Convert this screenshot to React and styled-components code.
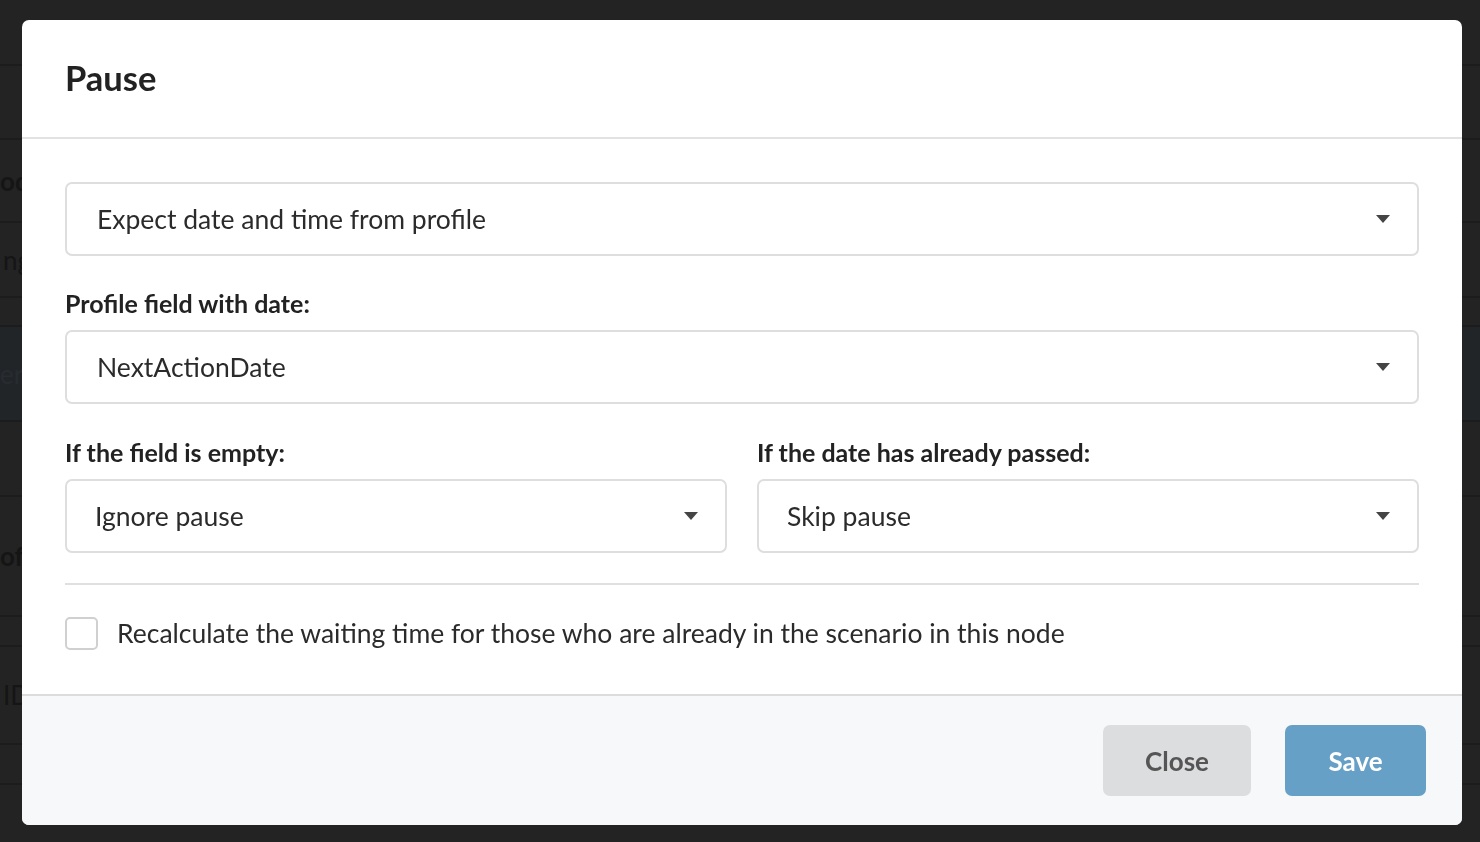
import React, { useState } from 'react';
import styled, { createGlobalStyle } from 'styled-components';

const GlobalStyle = createGlobalStyle`
  html, body {
    margin: 0;
    padding: 0;
    background: #232323;
    font-family: Lato, "Noto Sans", sans-serif;
  }
  * { box-sizing: border-box; }
`;

// page behind the modal, mostly hidden by the overlay
const Page = styled.div`
  height: 842px;
  overflow: hidden;
  background: #232323;
`;

const PageRow = styled.div`
  height: ${p => p.$h}px;
  border-bottom: 2px solid #1c1c1c;
  background: ${p => (p.$tint ? '#222528' : 'transparent')};
  display: flex;
  align-items: center;
  padding-left: ${p => p.$indent || 0}px;
  font-size: 26px;
  font-weight: ${p => (p.$bold ? 700 : 400)};
  color: ${p => (p.$tint ? '#262c31' : '#151515')};
  white-space: nowrap;
`;

const Overlay = styled.div`
  position: fixed;
  inset: 0;
  padding: 20px 0 0 22px;
`;

const Modal = styled.div`
  width: 1440px;
  background: #fff;
  border-radius: 7px;
  overflow: hidden;
`;

const Header = styled.div`
  height: 119px;
  padding: 0 43px;
  display: flex;
  align-items: center;
  border-bottom: 2px solid #e2e2e2;
`;

const Title = styled.h2`
  margin: 0;
  font-size: 34.5px;
  font-weight: 700;
  color: #222;
  padding-bottom: 2px;
`;

const Body = styled.div`
  padding: 43px 43px 44px;
`;

const Field = styled.div`
  display: flex;
  flex-direction: column;
  margin-top: ${p => p.$top || 0}px;
`;

const Label = styled.div`
  font-size: 25px;
  font-weight: 700;
  color: #222;
  line-height: 30px;
  margin-bottom: 12px;
`;

const SelectBox = styled.div`
  height: 74px;
  border: 2px solid #dedede;
  border-radius: 7px;
  display: flex;
  align-items: center;
  justify-content: space-between;
  padding: 0 27px 0 ${p => p.$pad || 30}px;
  font-size: 26.5px;
  color: #2b2b2b;
  cursor: pointer;
`;

const Caret = styled.span`
  width: 0;
  height: 0;
  border-left: 7px solid transparent;
  border-right: 7px solid transparent;
  border-top: 8px solid #444;
`;

const Columns = styled.div`
  display: grid;
  grid-template-columns: 1fr 1fr;
  column-gap: 30px;
  margin-top: 33px;
`;

const Divider = styled.hr`
  margin: 30px 0 0;
  border: none;
  border-top: 2px solid #e0e0e0;
`;

const CheckRow = styled.label`
  display: flex;
  align-items: center;
  gap: 19px;
  margin-top: 32px;
  font-size: 26.5px;
  line-height: 33px;
  color: #2b2b2b;
  cursor: pointer;
`;

const CheckBox = styled.span`
  width: 33px;
  height: 33px;
  border: 2px solid #d0d0d0;
  border-radius: 5px;
  background: ${p => (p.$on ? '#67a0c6' : '#fff')};
  flex-shrink: 0;
`;

const Footer = styled.div`
  background: #f7f8fa;
  border-top: 2px solid #dcdcdc;
  height: 131px;
  padding: 29px 36px 0 0;
  display: flex;
  justify-content: flex-end;
  gap: 34px;
`;

const Button = styled.button`
  height: 71px;
  width: ${p => p.$w}px;
  border: none;
  border-radius: 7px;
  font-family: inherit;
  font-size: 26px;
  font-weight: 700;
  background: ${p => (p.$primary ? '#67a0c6' : '#dcdddf')};
  color: ${p => (p.$primary ? '#fff' : '#555')};
  cursor: pointer;
`;

const Select = ({ value, pad }) => (
  <SelectBox $pad={pad}>
    <span>{value}</span>
    <Caret />
  </SelectBox>
);

const rows = [
  { h: 66 }, { h: 74 }, { h: 83, text: 'od', indent: -2, bold: true },
  { h: 75, text: 'ng', indent: 3 }, { h: 29 }, { h: 95, text: 'er p', indent: -2, tint: true },
  { h: 75 }, { h: 120, text: 'of', indent: 0, bold: true }, { h: 30 },
  { h: 98, text: 'ID', indent: 3 }, { h: 40 }, { h: 60 },
];

const App = () => {
  const [checked, setChecked] = useState(false);

  return (
    <>
      <GlobalStyle />
      <Page>
        {rows.map((r, i) => (
          <PageRow key={i} $h={r.h} $indent={r.indent} $bold={r.bold} $tint={r.tint}>
            {r.text}
          </PageRow>
        ))}
      </Page>
      <Overlay>
        <Modal>
          <Header>
            <Title>Pause</Title>
          </Header>
          <Body>
            <Select value="Expect date and time from profile" pad={30} />
            <Field $top={32}>
              <Label>Profile field with date:</Label>
              <Select value="NextActionDate" pad={30} />
            </Field>
            <Columns>
              <Field>
                <Label>If the field is empty:</Label>
                <Select value="Ignore pause" pad={28} />
              </Field>
              <Field>
                <Label>If the date has already passed:</Label>
                <Select value="Skip pause" pad={28} />
              </Field>
            </Columns>
            <Divider />
            <CheckRow onClick={() => setChecked(!checked)}>
              <CheckBox $on={checked} />
              Recalculate the waiting time for those who are already in the scenario in this node
            </CheckRow>
          </Body>
          <Footer>
            <Button $w={148}>Close</Button>
            <Button $w={141} $primary>Save</Button>
          </Footer>
        </Modal>
      </Overlay>
    </>
  );
};

export default App;
